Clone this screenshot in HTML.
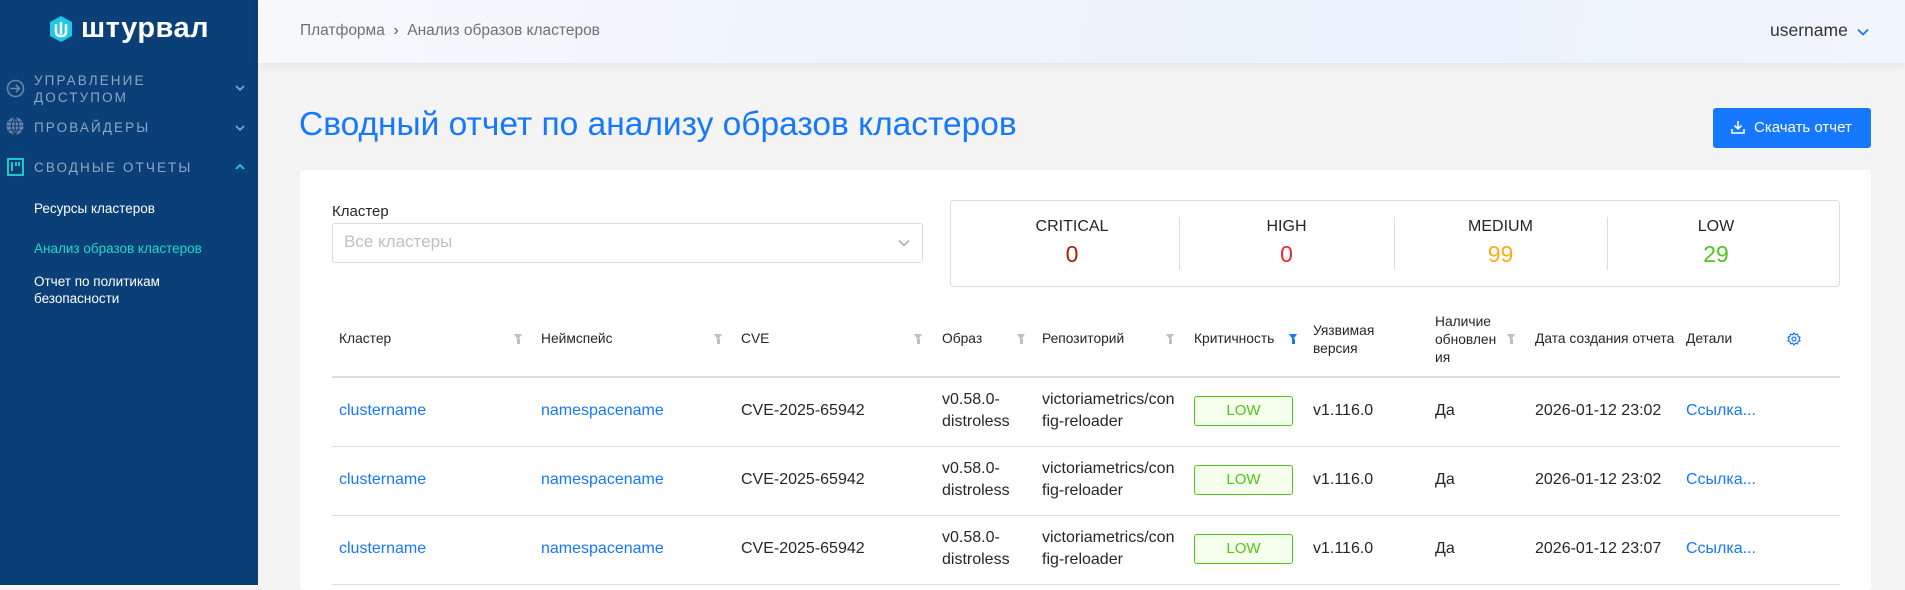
<!DOCTYPE html>
<html><head><meta charset="utf-8"><style>
*{box-sizing:border-box;margin:0;padding:0}
body{width:1905px;height:585px;overflow:hidden;background:#f4f4f4;font-family:"Liberation Sans","Noto Sans CJK SC",sans-serif;position:relative;color:#262626}
.a{position:absolute;white-space:nowrap}
#side{position:absolute;left:0;top:0;width:258px;height:585px;background:#0a3f77}
.mi{color:#8fa6c4;font-size:13.5px;letter-spacing:2.1px;line-height:17px}
.si{color:#fff;font-size:13.5px;line-height:17px}
#hdr{position:absolute;left:258px;top:0;width:1647px;height:63px;background:linear-gradient(100deg,#f7f9fc 0%,#eef4fb 40%,#e9f2fd 70%,#f1f6fc 100%);box-shadow:0 2px 10px rgba(0,0,0,.08)}
.card{position:absolute;left:300px;top:170px;width:1571px;height:420px;background:#fff;border-radius:4px}
.th{font-size:13.8px;color:#262626;line-height:16px}
.td{font-size:16px;color:#262626;line-height:22px}
.lnk{color:#1677ff}
.f{position:absolute;width:0;height:0;border-left:4.5px solid transparent;border-right:4.5px solid transparent;border-top:6px solid #bfbfbf}
.f:after{content:"";position:absolute;left:-1.5px;top:-1px;width:3px;height:5px;background:#bfbfbf}
.f.b{border-top-color:#1677ff}.f.b:after{background:#1677ff}
.tag{position:absolute;left:1194px;width:99px;height:30px;border:1px solid #52c41a;background:#f6ffed;color:#52c41a;font-size:15px;text-align:center;line-height:28px;border-radius:3px}
.hl{position:absolute;left:332px;width:1508px;height:1px;background:#e0e0e0}
</style></head><body>
<div id="side">
 <svg class="a" style="left:48px;top:15px" width="26" height="28" viewBox="0 0 26 28"><path d="M13 1 L24 7 V21 L13 27 L2 21 V7Z" fill="#1ec8e8"/><path d="M8 9 V17 Q8 21 13 21 Q18 21 18 17 V9" stroke="#fff" stroke-width="2.5" fill="none"/><path d="M13 7 V19" stroke="#fff" stroke-width="2.5"/></svg>
 <div class="a" style="left:81px;top:12px;color:#fff;font-size:29px;font-weight:bold;letter-spacing:0.5px">штурвал</div>
 <svg class="a" style="left:6px;top:79px" width="19" height="19"><circle cx="9.5" cy="9.5" r="8" fill="none" stroke="#6c86aa" stroke-width="1.6"/><path d="M4 9.5H13M10 6l3.5 3.5L10 13" stroke="#6c86aa" stroke-width="1.6" fill="none"/></svg>
 <div class="a mi" style="left:34px;top:72px">УПРАВЛЕНИЕ<br>ДОСТУПОМ</div>
 <svg class="a" style="left:5px;top:116px" width="20" height="20"><circle cx="10" cy="10" r="8.5" fill="#6c86aa"/><path d="M10 1.5V18.5M1.5 10H18.5M3 6H17M3 14H17M10 1.5C5 6 5 14 10 18.5M10 1.5C15 6 15 14 10 18.5" stroke="#0a3f77" stroke-width="1.1" fill="none"/></svg>
 <div class="a mi" style="left:34px;top:119px">ПРОВАЙДЕРЫ</div>
 <svg class="a" style="left:7px;top:158px" width="17" height="18"><rect x="1" y="1" width="15" height="16" fill="none" stroke="#1fd9d0" stroke-width="1.8"/><path d="M5 4V13M9 4V8M12 4V8" stroke="#1fd9d0" stroke-width="1.8"/></svg>
 <div class="a mi" style="left:34px;top:159px">СВОДНЫЕ ОТЧЕТЫ</div>
 <svg class="a" style="left:235px;top:84px" width="10" height="8"><path d="M1 2l4 4 4-4" stroke="#8fa6c4" stroke-width="1.6" fill="none"/></svg>
 <svg class="a" style="left:235px;top:124px" width="10" height="8"><path d="M1 2l4 4 4-4" stroke="#8fa6c4" stroke-width="1.6" fill="none"/></svg>
 <svg class="a" style="left:235px;top:163px" width="10" height="8"><path d="M1 6l4-4 4 4" stroke="#1fd9d0" stroke-width="1.6" fill="none"/></svg>
 <div class="a si" style="left:34px;top:200px">Ресурсы кластеров</div>
 <div class="a si" style="left:34px;top:240px;color:#1fd9d0">Анализ образов кластеров</div>
 <div class="a si" style="left:34px;top:273px">Отчет по политикам<br>безопасности</div>
</div>
<div id="hdr"></div>
<div class="a" style="left:300px;top:22px;font-size:15.5px;color:#707070">Платформа &nbsp;<span style="color:#555">›</span>&nbsp; Анализ образов кластеров</div>
<div class="a" style="left:1770px;top:20px;font-size:17.5px;color:#333">username</div>
<svg class="a" style="left:1857px;top:28px" width="12" height="8"><path d="M1 1.5l5 5 5-5" stroke="#1677ff" stroke-width="1.8" fill="none"/></svg>
<div class="a" style="left:299px;top:106px;font-size:33.5px;color:#1677ff">Сводный отчет по анализу образов кластеров</div>
<div class="a" style="left:1713px;top:108px;width:158px;height:40px;background:#1677ff;border-radius:3px"></div>
<svg class="a" style="left:1731px;top:120px" width="14" height="14"><path d="M7 1V9M3.5 5.5L7 9l3.5-3.5M1 9V13H13V9" stroke="#fff" stroke-width="1.6" fill="none"/></svg>
<div class="a" style="left:1754px;top:119px;font-size:15px;color:#fff">Скачать отчет</div>
<div class="card"></div>
<div class="a" style="left:332px;top:203px;font-size:15px;color:#262626">Кластер</div>
<div class="a" style="left:332px;top:223px;width:591px;height:40px;border:1px solid #d9d9d9;border-radius:3px"></div>
<div class="a" style="left:344px;top:232px;font-size:17px;color:#bfbfbf">Все кластеры</div>
<svg class="a" style="left:898px;top:239px" width="12" height="8"><path d="M1 1.5l5 5 5-5" stroke="#aaa" stroke-width="1.5" fill="none"/></svg>
<div class="a" style="left:950px;top:200px;width:890px;height:87px;border:1.5px solid #dcdcdc;border-radius:4px"></div>
<div class="a" style="left:1179px;top:217px;width:1px;height:53px;background:#dcdcdc"></div>
<div class="a" style="left:1394px;top:217px;width:1px;height:53px;background:#dcdcdc"></div>
<div class="a" style="left:1607px;top:217px;width:1px;height:53px;background:#dcdcdc"></div>
<div class="a" style="left:965px;width:214px;top:218px;text-align:center;font-size:16px;color:#262626">CRITICAL</div>
<div class="a" style="left:965px;width:214px;top:241px;text-align:center;font-size:23px;color:#ad2102">0</div>
<div class="a" style="left:1179px;width:215px;top:218px;text-align:center;font-size:16px;color:#262626">HIGH</div>
<div class="a" style="left:1179px;width:215px;top:241px;text-align:center;font-size:23px;color:#f5222d">0</div>
<div class="a" style="left:1394px;width:213px;top:218px;text-align:center;font-size:16px;color:#262626">MEDIUM</div>
<div class="a" style="left:1394px;width:213px;top:241px;text-align:center;font-size:23px;color:#faad14">99</div>
<div class="a" style="left:1607px;width:218px;top:218px;text-align:center;font-size:16px;color:#262626">LOW</div>
<div class="a" style="left:1607px;width:218px;top:241px;text-align:center;font-size:23px;color:#52c41a">29</div>

<div class="a th" style="left:339px;top:331px">Кластер</div>
<div class="a th" style="left:541px;top:331px">Неймспейс</div>
<div class="a th" style="left:741px;top:331px">CVE</div>
<div class="a th" style="left:942px;top:331px">Образ</div>
<div class="a th" style="left:1042px;top:331px">Репозиторий</div>
<div class="a th" style="left:1194px;top:331px">Критичность</div>
<div class="a th" style="left:1313px;top:322px;line-height:18px">Уязвимая<br>версия</div>
<div class="a th" style="left:1435px;top:313px;line-height:18px">Наличие<br>обновлен<br>ия</div>
<div class="a th" style="left:1535px;top:331px">Дата создания отчета</div>
<div class="a th" style="left:1686px;top:331px">Детали</div>
<svg class="a" style="left:1787px;top:332px" width="14" height="14" viewBox="0 0 14 14"><circle cx="7" cy="7" r="2" fill="none" stroke="#1677ff" stroke-width="1.3"/><path d="M7 1L8.3 2.7 10.5 2.2 11 4.3 13 5.3 12 7 13 8.7 11 9.7 10.5 11.8 8.3 11.3 7 13 5.7 11.3 3.5 11.8 3 9.7 1 8.7 2 7 1 5.3 3 4.3 3.5 2.2 5.7 2.7Z" fill="none" stroke="#1677ff" stroke-width="1.2"/></svg>
<div class="f" style="left:514px;top:334px"></div>
<div class="f" style="left:714px;top:334px"></div>
<div class="f" style="left:914px;top:334px"></div>
<div class="f" style="left:1017px;top:334px"></div>
<div class="f" style="left:1166px;top:334px"></div>
<div class="f b" style="left:1289px;top:334px"></div>
<div class="f" style="left:1507px;top:334px"></div>
<div class="hl" style="top:376px;height:2px;background:#dcdcdc"></div>

<div class="a td lnk" style="left:339px;top:400px">clustername</div>
<div class="a td lnk" style="left:541px;top:400px">namespacename</div>
<div class="a td" style="left:741px;top:400px">CVE-2025-65942</div>
<div class="a td" style="left:942px;top:389px">v0.58.0-<br>distroless</div>
<div class="a td" style="left:1042px;top:389px">victoriametrics/con<br>fig-reloader</div>
<div class="tag" style="top:396px">LOW</div>
<div class="a td" style="left:1313px;top:400px">v1.116.0</div>
<div class="a td" style="left:1435px;top:400px">Да</div>
<div class="a td" style="left:1535px;top:400px">2026-01-12 23:02</div>
<div class="a td lnk" style="left:1686px;top:400px">Ссылка...</div>
<div class="hl" style="top:446px"></div>

<div class="a td lnk" style="left:339px;top:469px">clustername</div>
<div class="a td lnk" style="left:541px;top:469px">namespacename</div>
<div class="a td" style="left:741px;top:469px">CVE-2025-65942</div>
<div class="a td" style="left:942px;top:458px">v0.58.0-<br>distroless</div>
<div class="a td" style="left:1042px;top:458px">victoriametrics/con<br>fig-reloader</div>
<div class="tag" style="top:465px">LOW</div>
<div class="a td" style="left:1313px;top:469px">v1.116.0</div>
<div class="a td" style="left:1435px;top:469px">Да</div>
<div class="a td" style="left:1535px;top:469px">2026-01-12 23:02</div>
<div class="a td lnk" style="left:1686px;top:469px">Ссылка...</div>
<div class="hl" style="top:515px"></div>

<div class="a td lnk" style="left:339px;top:538px">clustername</div>
<div class="a td lnk" style="left:541px;top:538px">namespacename</div>
<div class="a td" style="left:741px;top:538px">CVE-2025-65942</div>
<div class="a td" style="left:942px;top:527px">v0.58.0-<br>distroless</div>
<div class="a td" style="left:1042px;top:527px">victoriametrics/con<br>fig-reloader</div>
<div class="tag" style="top:534px">LOW</div>
<div class="a td" style="left:1313px;top:538px">v1.116.0</div>
<div class="a td" style="left:1435px;top:538px">Да</div>
<div class="a td" style="left:1535px;top:538px">2026-01-12 23:07</div>
<div class="a td lnk" style="left:1686px;top:538px">Ссылка...</div>
<div class="hl" style="top:584px"></div>
</body></html>
